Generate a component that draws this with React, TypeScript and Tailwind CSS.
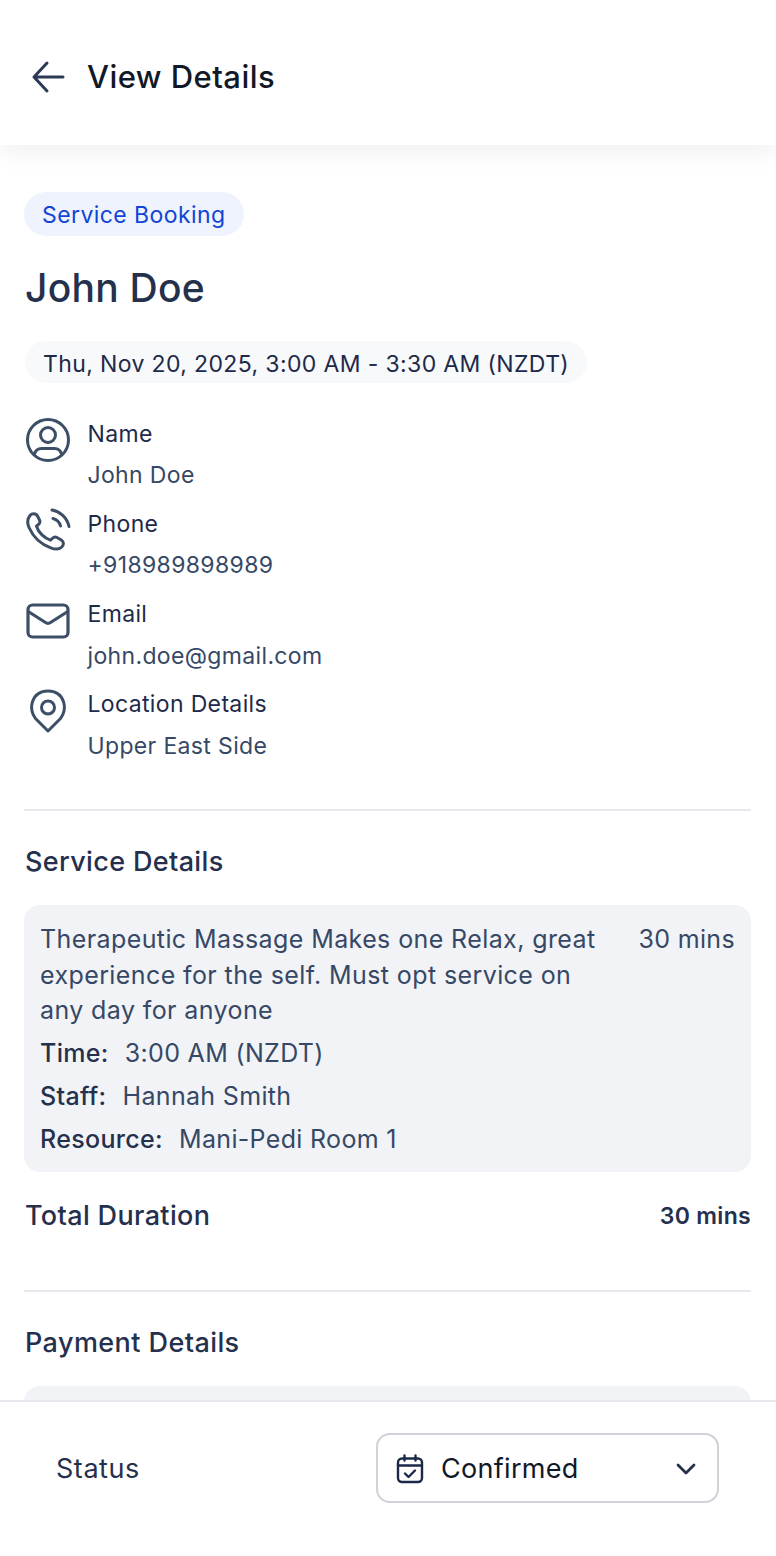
import React from "react";

const Row = ({ icon, label, value }: { icon: React.ReactNode; label: string; value: string }) => (
  <div className="flex h-[90.3px] items-start">
    <div className="flex h-[48px] w-[46px] items-center justify-center">{icon}</div>
    <div className="ml-[16.500px] flex flex-col tracking-[0.35px]">
      <span className="mt-[3.500px] h-[29px] text-[23px] leading-[29px] text-[#1e2a4a]">{label}</span>
      <span className="mt-[12.500px] h-[29px] text-[23px] leading-[29px] text-[#364865]">{value}</span>
    </div>
  </div>
);

const stroke = { fill: "none", stroke: "#3d4f66", strokeWidth: 2.2, strokeLinecap: "round" as const, strokeLinejoin: "round" as const };

export default function App() {
  return (
    <div className="flex h-[1556px] w-[776px] flex-col overflow-hidden bg-white font-['Inter',sans-serif]">
      <header className="relative z-10 flex h-[145px] shrink-0 items-center bg-white pt-[8px] pl-[29px] shadow-[0_8px_24px_rgba(0,0,0,0.06)]">
        <svg width="38" height="36" viewBox="0 0 38 36" {...stroke} stroke="#2c3a55" strokeWidth={3}>
          <path d="M34 18H5M18 4 5 18l13 14" />
        </svg>
        <h1 className="ml-[20px] text-[31px] leading-[36px] font-medium tracking-[0.45px] text-[#111827]">View Details</h1>
      </header>

      <main className="min-h-0 flex-1 overflow-hidden pt-[47px] pr-[25px] pl-[24px]">
        <span className="inline-flex h-[44px] items-center rounded-full bg-[#eef3fd] px-[18px] pt-[2px] text-[23px] tracking-[0.42px] text-[#1245d6]">Service Booking</span>
        <h2 className="mt-[29px] pl-[1px] text-[39px] leading-[46px] font-medium tracking-[0.25px] text-[#25304d]">John Doe</h2>
        <div className="mt-[30px] ml-[1px] inline-flex h-[42px] items-center rounded-full bg-[#f8f9fb] px-[18px] pt-[4px] text-[23px] tracking-[0.37px] text-[#1e2a4a]">Thu, Nov 20, 2025, 3:00 AM - 3:30 AM (NZDT)</div>

        <div className="mt-[33px] pl-[1px]">
          <Row label="Name" value="John Doe" icon={
            <svg width="46" height="46" viewBox="0 0 46 46" {...stroke} strokeWidth={3}>
              <circle cx="23" cy="23" r="20.5" />
              <circle cx="23" cy="18" r="7.5" />
              <path d="M9.5 37c1-3.5 4-5.5 7-5.5h13c3 0 6 2 7 5.5" />
            </svg>
          } />
          <Row label="Phone" value="+918989898989" icon={
            <svg width="46" height="46" viewBox="0 0 46 46" className="translate-y-[1px]" {...stroke} strokeWidth={3}>
              <path d="M5 7.5c2-2.5 6-2.5 7.5.5l2 4c.8 1.6.3 3.3-1 4.5l-2 1.7c2 6.5 8 12 14 14l2-2c1.2-1.2 3-1.5 4.5-.7l4.300 2.500c2.700 1.500 2.700 5 .5 7-3 2.800-7 2.500-11 .8C16 36.500 8 28.500 4 19.500c-1.700-4-2-8.500 1-12Z" />
              <path d="M27 2c8 1.500 15 7.500 17 16.500M28 10.500c3.500 1 6.500 3.500 7.500 7.500" />
            </svg>
          } />
          <Row label="Email" value="john.doe@gmail.com" icon={
            <svg width="44" height="36" viewBox="0 0 44 36" {...stroke} strokeWidth={3.2}>
              <rect x="2" y="2" width="40" height="32" rx="4.500" />
              <path d="m3 9 16.500 10.500c1.500 1 3.500 1 5 0L41 9" />
            </svg>
          } />
          <Row label="Location Details" value="Upper East Side" icon={
            <svg width="38" height="44" viewBox="0 0 38 44" {...stroke} strokeWidth={3}>
              <path d="M19 42 6.500 29.500C-1 21 2 2 19 2s20 19 12.500 27.500Z" />
              <circle cx="19" cy="18.500" r="6.500" />
            </svg>
          } />
        </div>

        <div className="mt-[32px] h-[2px] bg-[#e7e9ee]" />
        <h3 className="mt-[35px] ml-[1px] text-[27px] leading-[32px] font-medium tracking-[0.35px] text-[#25304d]">Service Details</h3>

        <div className="mt-[27px] rounded-[16px] bg-[#f1f3f7] px-[16px] pt-[17px] pb-[14px] text-[25px] leading-[35.5px] tracking-[0.4px] text-[#364865]">
          <div className="flex items-start justify-between">
            <p className="w-[560px]">Therapeutic Massage Makes one Relax, great experience for the self. Must opt service on any day for anyone</p>
            <span className="shrink-0 tracking-[0.33px]">30 mins</span>
          </div>
          <div className="mt-[8px] flex h-[35px] items-center"><span className="font-medium tracking-[0.33px] text-[#25304d]">Time:</span><span className="ml-[16px] tracking-[0.33px]">3:00 AM (NZDT)</span></div>
          <div className="mt-[8px] flex h-[35px] items-center"><span className="font-medium tracking-[0.33px] text-[#25304d]">Staff:</span><span className="ml-[16px] tracking-[0.33px]">Hannah Smith</span></div>
          <div className="mt-[8px] flex h-[35px] items-center"><span className="font-medium tracking-[0.33px] text-[#25304d]">Resource:</span><span className="ml-[16px] tracking-[0.33px]">Mani-Pedi Room 1</span></div>
        </div>

        <div className="mt-[27px] ml-[1px] flex items-center justify-between">
          <span className="text-[27px] leading-[34px] font-medium tracking-[0.35px] text-[#25304d]">Total Duration</span>
          <span className="text-[23px] leading-[34px] font-semibold tracking-[0.3px] text-[#25304d]">30 mins</span>
        </div>

        <div className="mt-[57px] h-[2px] bg-[#e7e9ee]" />
        <h3 className="mt-[35px] ml-[1px] text-[27px] leading-[32px] font-medium tracking-[0.42px] text-[#25304d]">Payment Details</h3>
        <div className="mt-[27px] h-[60px] rounded-[16px] bg-[#f1f3f7]" />
      </main>

      <footer className="flex h-[156px] shrink-0 items-start justify-between border-t-2 border-[#e7e9ee] bg-white pt-[31px] pr-[57px] pl-[56px]">
        <span className="mt-[19px] text-[27px] leading-[34px] tracking-[0.55px] text-[#25304d]">Status</span>
        <div className="flex h-[70px] w-[343px] items-center rounded-[14px] border-2 border-[#cfd2d9] pt-[2px] pr-[21px] pl-[18px]">
          <svg width="28" height="30" viewBox="0 0 28 30" {...stroke} stroke="#1b2848" strokeWidth={2.4}>
            <rect x="2" y="4.500" width="24" height="23.500" rx="4" />
            <path d="M2 11.500h24M8.500 1.500v5M19.500 1.500v5M9 19.500l3.500 3.500 6.500-6.500" />
          </svg>
          <span className="ml-[17px] flex-1 text-[27px] leading-[34px] tracking-[0.3px] text-[#111827]">Confirmed</span>
          <svg width="20" height="12" viewBox="0 0 20 12" {...stroke} stroke="#25304d" strokeWidth={2.8}>
            <path d="m2 2 8 8 8-8" />
          </svg>
        </div>
      </footer>
    </div>
  );
}
